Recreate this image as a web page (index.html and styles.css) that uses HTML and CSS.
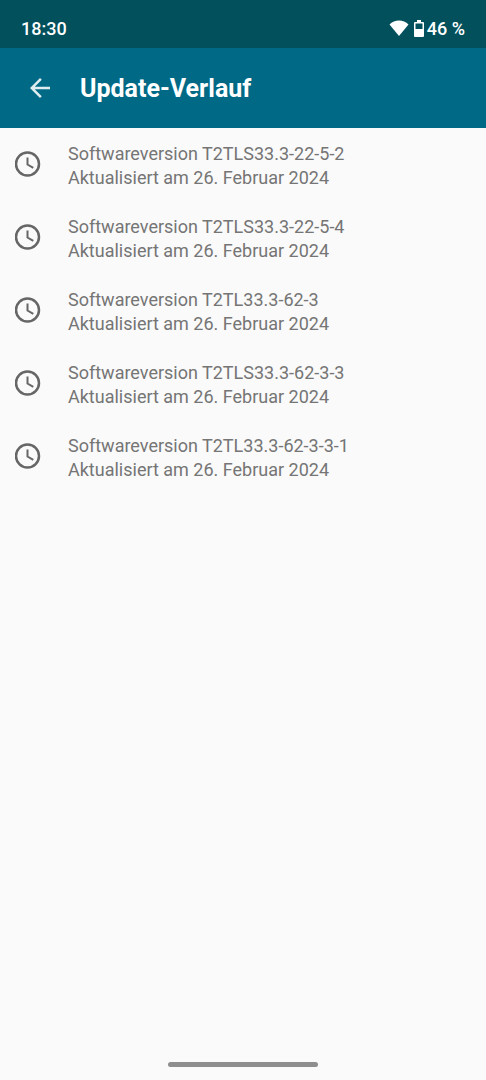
FILE: index.html
```html
<!DOCTYPE html>
<html lang="de">
<head>
    <meta charset="UTF-8">
    <meta name="viewport" content="width=device-width, initial-scale=1.0">
    <title>Update-Verlauf</title>
    <link rel="stylesheet" href="styles.css">
</head>
<body>
    <svg class="symbols" aria-hidden="true">
        <symbol id="clock" viewBox="0 0 26 26">
            <circle cx="12.500" cy="13" r="11.500"/>
            <path d="M12.500 6.500v7l5.800 3.300" stroke-width="2"/>
        </symbol>
    </svg>

    <div class="status-bar">
        <span>18:30</span>
        <div class="status-icons">
            <svg class="wifi" viewBox="0 0 20 16" aria-hidden="true">
                <path d="M10 16 .5 4.500C5.500-.8 14.500-.8 19.500 4.500z"/>
            </svg>
            <svg class="battery" viewBox="0 0 10 17" aria-hidden="true">
                <path fill-rule="evenodd" d="M3 0h4v2h2q1 0 1 1v13q0 1-1 1H1q-1 0-1-1V3q0-1 1-1h2zM1.500 3.500V9h7V3.500z"/>
            </svg>
            <span>46 %</span>
        </div>
    </div>

    <header class="app-bar">
        <button class="back" type="button" aria-label="Zurück">
            <svg viewBox="0 0 24 24" aria-hidden="true">
                <path d="M20 11H7.830l5.590-5.590L12 4l-8 8 8 8 1.410-1.410L7.830 13H20v-2z"/>
            </svg>
        </button>
        <h1>Update-Verlauf</h1>
    </header>

    <main>
        <ul class="history">
            <li>
                <svg class="clock" aria-hidden="true"><use href="#clock"/></svg>
                <p>Softwareversion T2TLS33.3-22-5-2<br>Aktualisiert am 26. Februar 2024</p>
            </li>
            <li>
                <svg class="clock" aria-hidden="true"><use href="#clock"/></svg>
                <p>Softwareversion T2TLS33.3-22-5-4<br>Aktualisiert am 26. Februar 2024</p>
            </li>
            <li>
                <svg class="clock" aria-hidden="true"><use href="#clock"/></svg>
                <p>Softwareversion T2TL33.3-62-3<br>Aktualisiert am 26. Februar 2024</p>
            </li>
            <li>
                <svg class="clock" aria-hidden="true"><use href="#clock"/></svg>
                <p>Softwareversion T2TLS33.3-62-3-3<br>Aktualisiert am 26. Februar 2024</p>
            </li>
            <li>
                <svg class="clock" aria-hidden="true"><use href="#clock"/></svg>
                <p>Softwareversion T2TL33.3-62-3-3-1<br>Aktualisiert am 26. Februar 2024</p>
            </li>
        </ul>
    </main>

    <div class="nav-handle"></div>
</body>
</html>
```
FILE: styles.css
```css
body {
    margin: 0;
    min-height: 100vh;
    display: flex;
    flex-direction: column;
    background: #fafafa;
    font-family: Roboto, sans-serif;
}
svg {
    display: block;
    fill: currentColor;
}
.symbols {
    display: none;
}
.status-bar {
    display: flex;
    align-items: center;
    justify-content: space-between;
    height: 48px;
    padding: 8px 21px 0;
    box-sizing: border-box;
    background: #02505c;
    color: white;
    font-size: 18px;
    font-weight: 500;
}
.status-icons {
    display: flex;
    align-items: center;
    gap: 3px;
}
.wifi {
    width: 20px;
    height: 16px;
    margin-right: 2px;
}
.battery {
    width: 10px;
    height: 17px;
}
.app-bar {
    display: flex;
    align-items: center;
    height: 80px;
    padding: 0 15px;
    background: #006a86;
    color: white;
}
.back {
    padding: 10px;
    border: none;
    background: none;
    color: #e0edf0;
    cursor: pointer;
}
.back svg {
    width: 30px;
    height: 30px;
}
h1 {
    margin: 0 15px;
    font-size: 25px;
    font-weight: 700;
}
main {
    flex: 1;
}
.history {
    margin: 0;
    padding: 14px 15px;
    list-style: none;
    display: flex;
    flex-direction: column;
    gap: 25px;
}
.history li {
    display: flex;
    gap: 27px;
}
.history p {
    margin: 0;
    color: #757575;
    font-size: 18px;
    line-height: 24px;
}
.clock {
    width: 26px;
    height: 26px;
    margin-top: 9px;
    flex: none;
    fill: none;
    stroke: #666666;
    stroke-width: 2.5;
}
.nav-handle {
    width: 31%;
    height: 5px;
    margin: 0 auto 13px;
    border-radius: 3px;
    background: #8e8e8e;
}
```
